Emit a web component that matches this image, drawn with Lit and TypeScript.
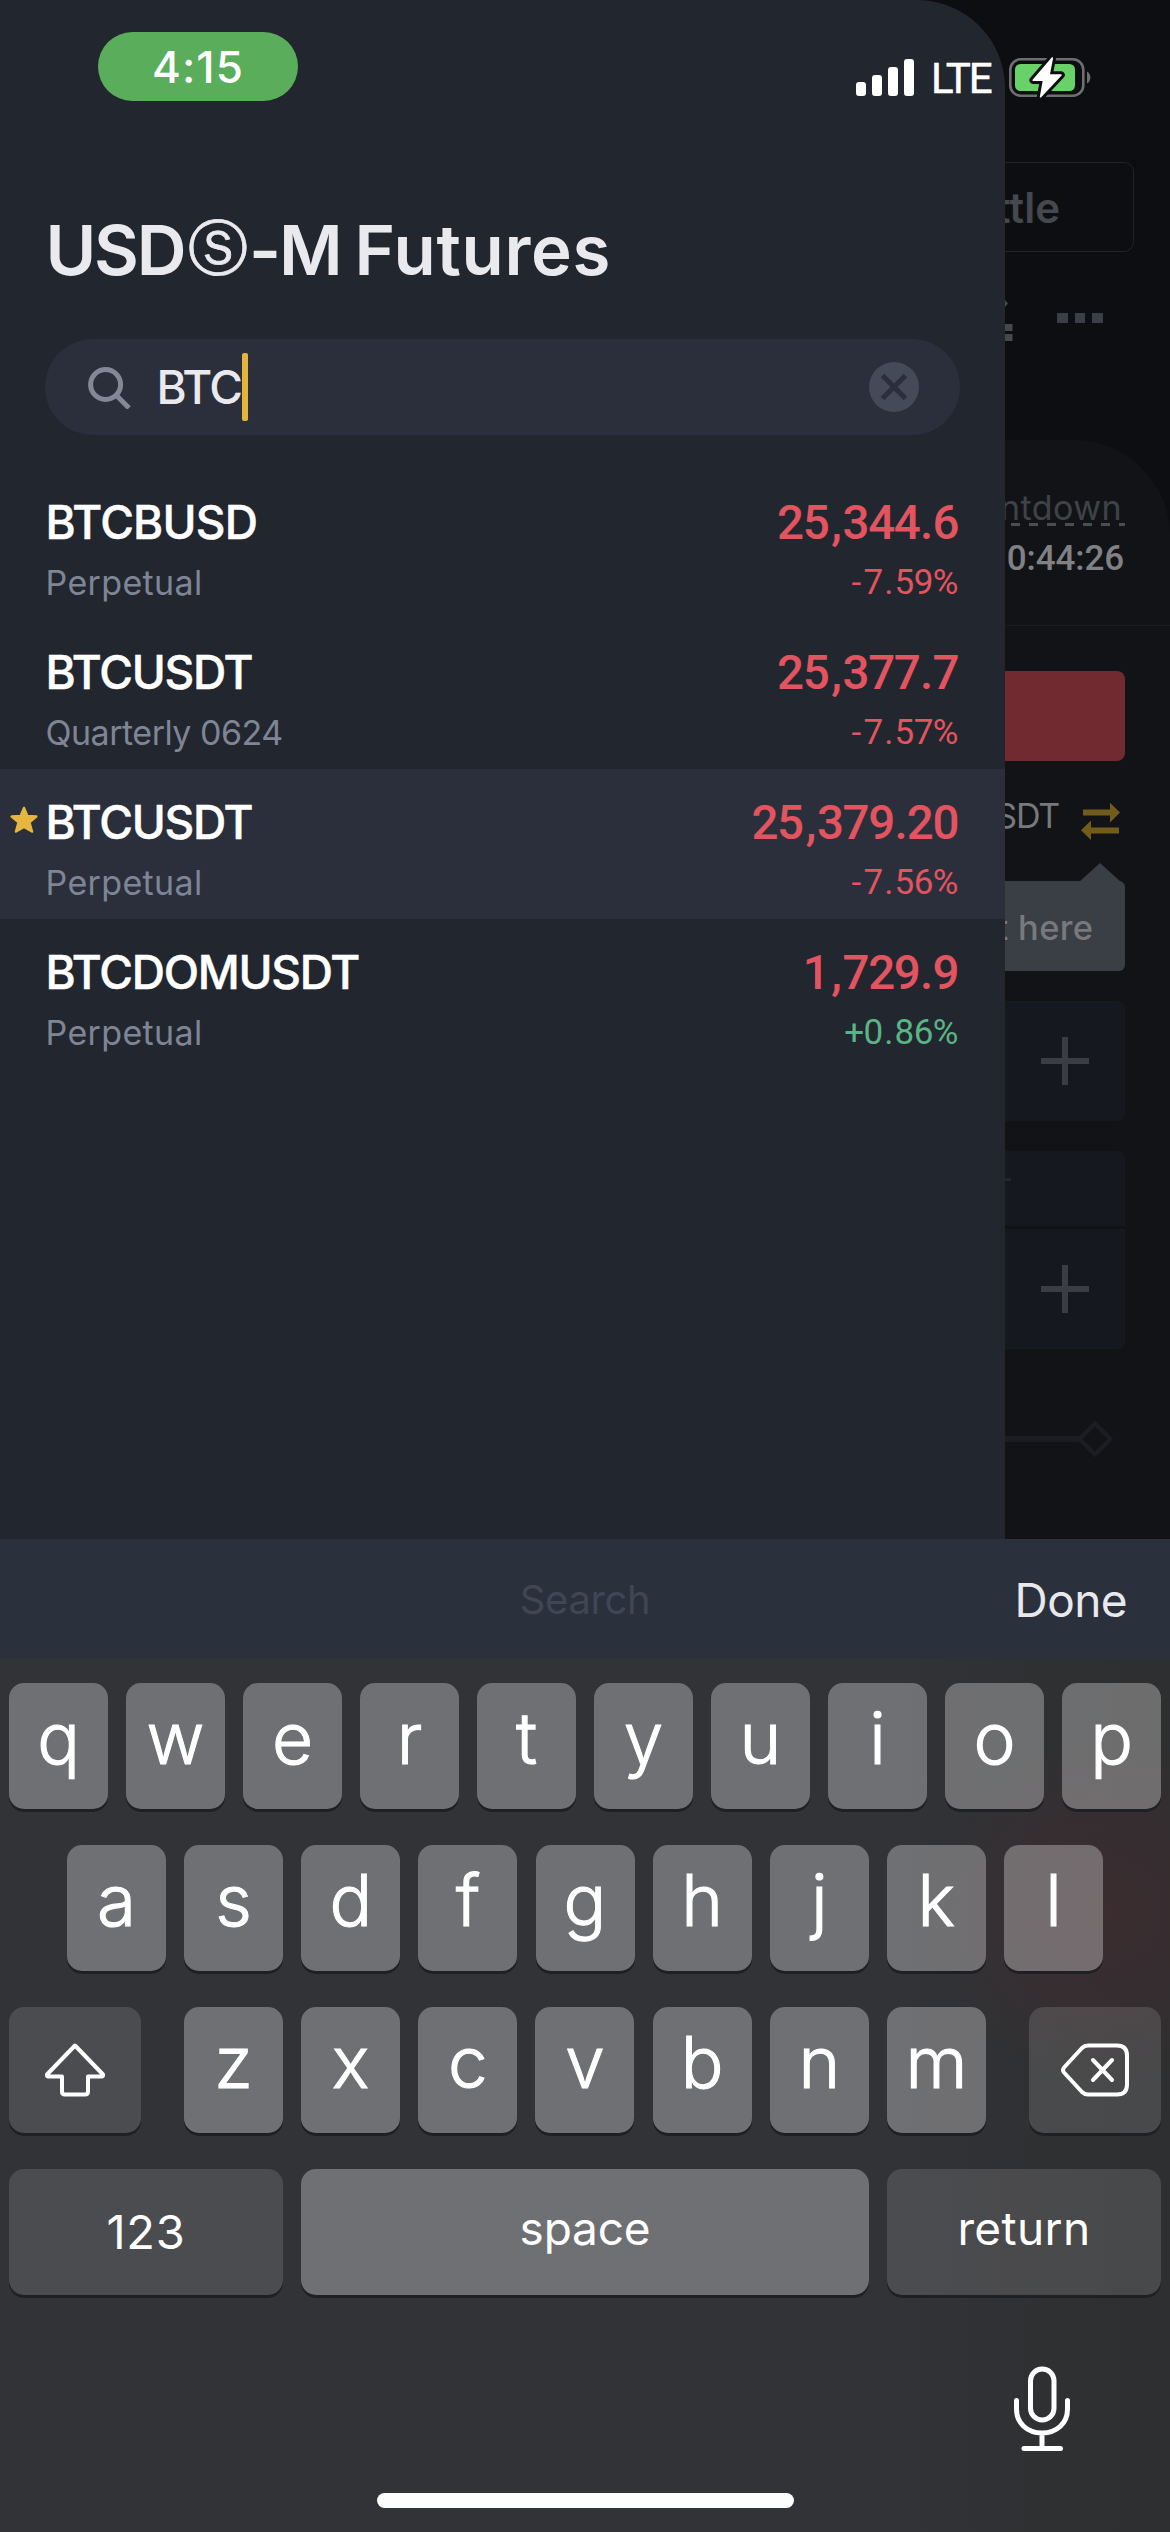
import { LitElement, html, css, nothing } from "lit";
import { customElement, property } from "lit/decorators.js";
import { classMap } from "lit/directives/class-map.js";

interface Pair {
  symbol: string;
  term: string;
  price: string;
  change: string;
  up?: boolean;
  starred?: boolean;
}

const PAIRS: Pair[] = [
  { symbol: "BTCBUSD", term: "Perpetual", price: "25,344.6", change: "-7.59%" },
  { symbol: "BTCUSDT", term: "Quarterly 0624", price: "25,377.7", change: "-7.57%" },
  { symbol: "BTCUSDT", term: "Perpetual", price: "25,379.20", change: "-7.56%", starred: true },
  { symbol: "BTCDOMUSDT", term: "Perpetual", price: "1,729.9", change: "+0.86%", up: true },
];

@customElement("status-bar")
class StatusBar extends LitElement {
  static styles = css`
    :host { display: flex; align-items: flex-start; height: 120px; padding-left: 98px; box-sizing: border-box; color: #fff; font-family: Inter, sans-serif; }
    .time { margin-top: 32px; width: 200px; height: 69px; border-radius: 35px; background: #5aad5a; font-size: 44px; font-weight: 500; line-height: 70px; text-align: center; letter-spacing: 1.1px; }
    .signal { margin: 59px 0 0 558px; }
    .net { margin: 54px 0 0 17px; width: 62px; font: 400 42px/50px Roboto, sans-serif; letter-spacing: -2.2px; -webkit-text-stroke: 0.5px #fff; }
    .battery { margin: 54px 0 0 12px; }
    svg { display: block; flex: none; }
  `;
  render() {
    return html`
      <div class="time">4:15</div>
      <svg class="signal" width="58" height="37" fill="#fff">
        <rect x="0" y="23" width="10" height="14" rx="3"/><rect x="16" y="16" width="10" height="21" rx="3"/>
        <rect x="32" y="8" width="10" height="29" rx="3"/><rect x="48" y="0" width="10" height="37" rx="3"/>
      </svg>
      <span class="net">LTE</span>
      <svg class="battery" width="90" height="50" viewBox="1005 54 90 50">
        <rect x="1010.3" y="59.3" width="73" height="36.4" rx="10.5" fill="none" stroke="#6e6f72" stroke-width="2.6"/>
        <path d="M1087 71.5a7 7 0 0 1 0 12z" fill="#6e6f72"/>
        <rect x="1015" y="64" width="60" height="27" rx="5.5" fill="#68d168"/>
        <path d="M1052.3 58L1033.2 80.2H1043.6L1040.6 96.8L1061 75H1049z" fill="#0d0e12" stroke="#0d0e12" stroke-width="7.5" stroke-linejoin="round"/>
        <path d="M1052.3 58L1033.2 80.2H1043.6L1040.6 96.8L1061 75H1049z" fill="#fff" stroke="#fff" stroke-width="1.6" stroke-linejoin="round"/>
      </svg>`;
  }
}

@customElement("trade-backdrop")
class TradeBackdrop extends LitElement {
  static styles = css`
    :host { display: block; overflow: hidden; padding-top: 162px; box-sizing: border-box; background: #0d0e12; color: #78797c; font-family: Inter, sans-serif; }
    .battle { box-sizing: border-box; height: 90px; margin: 0 36px 0 -20px; border: 1.5px solid #202226; border-radius: 10px; padding-right: 73px; font-size: 42px; font-weight: 600; line-height: 89px; color: #45484d; white-space: nowrap; display: flex; justify-content: flex-end; }
    svg { display: block; overflow: visible; }
    .tools { margin-top: 38px; }
    .sheet { margin-top: 90px; height: 1100px; box-sizing: border-box; padding-top: 45.5px; background: #121317; border-top-right-radius: 96px; }
    .label { width: 123px; height: 40.5px; margin-left: -3px; padding-right: 3px; box-sizing: border-box; font-size: 34px; line-height: 44px; letter-spacing: 0.45px; color: #3f4347; display: flex; justify-content: flex-end;
      background: repeating-linear-gradient(90deg, transparent 0 9px, #4b4e51 9px 18px) left bottom / 100% 3px no-repeat; }
    .clock { margin: 11px 46px 44px 0; font: 500 35px/44px Roboto, sans-serif; color: #808184; display: flex; justify-content: flex-end; letter-spacing: -0.1px; }
    .rule { height: 1px; background: #1a1c20; }
    .sell { margin: 45px 45px 0 0; height: 90px; border-radius: 0 8px 8px 0; background: #702a30; }
    .asset { display: flex; justify-content: flex-end; margin: 32.6px 45px 0 0; height: 44px; gap: 21px; font-size: 34px; line-height: 44px; letter-spacing: -1.2px; }
    .arrows { flex: none; }
    .tip { position: relative; margin: 43.4px 45px 0 0; height: 90px; border-radius: 0 6px 6px 0; background: #3a3e45; padding-right: 31.5px; display: flex; justify-content: flex-end; font-size: 34.5px; font-weight: 500; line-height: 93px; letter-spacing: 0.36px; white-space: nowrap; }
    .caret { position: absolute; right: 4px; top: -18px; width: 42px; height: 19px; background: #3a3e45; clip-path: polygon(50% 0, 100% 100%, 0 100%); }
    .box { margin: 30px 45px 0 0; height: 120px; box-sizing: border-box; border: 2px solid #17191d; border-left: 0; border-radius: 0 8px 8px 0; background: #15181f; display: flex; align-items: center; padding-left: 36px; }
    .head { height: 75px; border-radius: 0 8px 0 0; padding: 0; border-bottom: 0; }
    .tail { margin-top: 3px; border-radius: 0 0 8px 0; }
    .dash { width: 6px; height: 3px; background: #23262c; margin-top: -19px; }
    .slider { margin-top: 60px; }
  `;
  private plus() {
    return html`<svg width="48" height="48" stroke="#3a3d44" stroke-width="6"><path d="M0 24H48M24 0V48"/></svg>`;
  }
  render() {
    return html`
      <div class="battle">ttle</div>
      <svg class="tools" width="165" height="60" fill="#45484d">
        <path d="M0 10l3 3.5l-3 3.5z"/><rect x="0" y="34" width="7.5" height="7"/><rect x="0" y="44" width="7.5" height="7"/>
        <g fill="#3b3f45"><rect x="52" y="23" width="11" height="10"/><rect x="70" y="23" width="10" height="10"/><rect x="87" y="23" width="11" height="10"/></g>
      </svg>
      <div class="sheet">
        <div class="label">ntdown</div>
        <div class="clock">0:44:26</div>
        <div class="rule"></div>
        <div class="sell"></div>
        <div class="asset">SDT
          <svg class="arrows" width="45" height="44" viewBox="1080 793.6 45 44" fill="#735c1b">
            <path d="M1083 809h27v-6.6l10 9.8l-10 9.8v-7h-27zM1119 833h-28v6.6l-10-9.8l10-9.8v7h28z"/>
          </svg>
        </div>
        <div class="tip"><i class="caret"></i>t here</div>
        <div class="box">${this.plus()}</div>
        <div class="box head"><i class="dash"></i></div>
        <div class="box tail">${this.plus()}</div>
        <svg class="slider" width="165" height="60" fill="none" stroke="#1b1d22">
          <path d="M0 30H73" stroke-width="6"/>
          <path d="M90 14.5L105.5 30L90 45.5L74.5 30z" stroke-width="4.5" stroke-linejoin="round"/>
        </svg>
      </div>`;
  }
}

@customElement("pair-drawer")
class PairDrawer extends LitElement {
  static styles = css`
    :host { display: block; box-sizing: border-box; padding-top: 207px; background: #22262f; border-top-right-radius: 88px; font-family: Inter, sans-serif; color: #fff; }
    h1 { margin: 0 0 0 45.5px; height: 84px; font-size: 69px; font-weight: 600; line-height: 86px; color: #eaeaee; white-space: nowrap; }
    .usd { letter-spacing: -2.2px; }
    .coin { font: 400 60px/1px "DejaVu Sans", sans-serif; vertical-align: 6px; margin: 0 0.5px 0 4px; -webkit-text-stroke: 0.8px #eaeaee; }
    .rest { letter-spacing: -2px; }
    .word { letter-spacing: 0.7px; margin-left: -1.5px; }
    .search { margin: 48px 45px 0; height: 96px; border-radius: 48px; background: #2a2f3b; display: flex; align-items: center; padding: 0 41px 0 43px; box-sizing: border-box; color: #eaeaee; font-size: 46px; line-height: 99px; }
    .query { margin-left: 24.5px; letter-spacing: -1.8px; font-weight: 500; }
    .cursor { width: 6px; height: 68px; border-radius: 2px; background: #e2b53e; margin-left: 1px; }
    .clear { margin-left: auto; }
    svg { display: block; flex: none; }
    .list { margin-top: 34px; }
    .row { height: 150px; box-sizing: border-box; padding: 26px 47px 0 45.5px; display: flex; justify-content: space-between; position: relative; }
    .row.active { background: #2a2f3b; }
    .star { position: absolute; left: 9.5px; top: 37px; }
    .name, .quote { display: flex; flex-direction: column; gap: 10px; }
    .name { margin-top: -1.5px; gap: 11px; }
    .quote { align-items: flex-end; font-family: Roboto, sans-serif; color: #e2545f; }
    .symbol { font-size: 46px; font-weight: 500; line-height: 56px; letter-spacing: -1.25px; -webkit-text-stroke: 0.5px #fff; }
    .symbol.wide { letter-spacing: -0.8px; }
    .term { font-size: 34px; line-height: 44px; letter-spacing: 0.35px; color: #7e8594; }
    .term.long { letter-spacing: -0.5px; }
    .price { font-size: 47.5px; font-weight: 500; line-height: 56px; letter-spacing: -1.4px; }
    .price .comma { margin: 0 2px 0 3px; }
    .price .dot { margin: 0 0.6px; }
    .change { font-size: 35px; line-height: 44px; letter-spacing: -0.5px; }
    .change .dot { margin: 0 1.5px; }
    .change .minus { margin-right: 3px; }
    .change.up { color: #5bb386; }
  `;
  private figures(text: string) {
    const kinds: Record<string, string> = { ",": "comma", ".": "dot", "-": "minus" };
    return [...text].map((c) => (kinds[c] ? html`<span class=${kinds[c]}>${c}</span>` : c));
  }
  private row(p: Pair) {
    return html`<div class=${classMap({ row: true, active: !!p.starred })}>
      ${p.starred
        ? html`<svg class="star" width="28" height="28" viewBox="0 0 28 28"><path d="M14 2L17.3 9.9L26.3 10.5L19.4 16.4L22 25.5L14 20.8L6 25.5L8.6 16.4L1.7 10.5L10.7 9.9z" fill="#e6b73f" stroke="#e6b73f" stroke-width="2.5" stroke-linejoin="round"/></svg>`
        : nothing}
      <div class="name">
        <span class=${classMap({ symbol: true, wide: p.symbol.endsWith("BUSD") })}>${p.symbol}</span>
        <span class=${classMap({ term: true, long: p.term.length > 10 })}>${p.term}</span>
      </div>
      <div class="quote">
        <span class="price">${this.figures(p.price)}</span>
        <span class=${classMap({ change: true, up: !!p.up })}>${this.figures(p.change)}</span>
      </div>
    </div>`;
  }
  render() {
    return html`
      <h1><span class="usd">USD</span><span class="coin">Ⓢ</span><span class="rest">-M </span><span class="word">Futures</span></h1>
      <div class="search">
        <svg width="44" height="44" viewBox="0 0 44 44" fill="none" stroke="#828896" stroke-width="5"><circle cx="17.6" cy="19.5" r="15"/><path d="M28.5 30.5L41 43"/></svg>
        <span class="query">BTC</span><i class="cursor"></i>
        <svg class="clear" width="50" height="50"><circle cx="25" cy="25" r="25" fill="#454a58"/><path d="M13.5 13.5L36.5 36.5M36.5 13.5L13.5 36.5" stroke="#2a2f3b" stroke-width="5"/></svg>
      </div>
      <div class="list">${PAIRS.map((p) => this.row(p))}</div>`;
  }
}

@customElement("key-cap")
class KeyCap extends LitElement {
  @property() kind = "letter";
  static styles = css`
    :host { display: flex; justify-content: center; height: 126px; width: 99px; flex: none; box-sizing: border-box; border-radius: 15px; background: rgba(255, 255, 255, 0.3); box-shadow: 0 3px 0 #1f2023; color: #fff; font: 300 71px/110px Inter, sans-serif; -webkit-text-stroke: 1.1px #fff; }
    :host([kind="mod"]) { width: 132px; align-items: center; background: rgba(255, 255, 255, 0.125); }
    :host([kind="fn"]) { width: 274px; background: rgba(255, 255, 255, 0.125); font-size: 46px; font-weight: 400; line-height: 119px; letter-spacing: 0.4px; -webkit-text-stroke: 0; }
    :host([kind="num"]) { width: 274px; background: rgba(255, 255, 255, 0.125); font-size: 47px; font-weight: 400; line-height: 126px; letter-spacing: 0.8px; -webkit-text-stroke: 0; }
    :host([kind="space"]) { width: 568px; font-size: 46px; font-weight: 400; line-height: 119px; letter-spacing: -0.2px; -webkit-text-stroke: 0; }
  `;
  render() {
    return html`<slot></slot>`;
  }
}

@customElement("touch-keyboard")
class TouchKeyboard extends LitElement {
  static styles = css`
    :host { display: flex; flex-direction: column; height: 993px; color: #fff; font-family: Inter, sans-serif;
      background: radial-gradient(circle 175px at 1108px 372px, rgba(96, 38, 48, 0.26), rgba(96, 38, 48, 0.17) 45%, rgba(96, 38, 48, 0)), linear-gradient(90deg, #323337 900px, #2e2f30 1120px); }
    .bar { flex: none; height: 120px; background: #2a303c; display: grid; grid-template-columns: 1fr auto 1fr; padding: 0 43px; align-items: center; }
    .hint { grid-column: 2; font-size: 40px; line-height: 122px; letter-spacing: -0.4px; color: #404654; }
    .done { justify-self: end; font-size: 46px; line-height: 120px; letter-spacing: -0.6px; color: #e8e9ed; }
    .keys { display: flex; flex-direction: column; gap: 36px; padding: 24px 9px 0; }
    .line { display: flex; justify-content: space-between; }
    .inset { padding: 0 58px; }
    .mid { display: flex; justify-content: space-between; width: 802px; }
    .foot { display: flex; justify-content: flex-end; padding: 69px 98px 0 0; }
    .home { margin: 39px auto 0; width: 417px; height: 15px; border-radius: 8px; background: #fdfdfd; }
    svg { display: block; }
  `;
  private caps(s: string) {
    return [...s].map((c) => html`<key-cap>${c}</key-cap>`);
  }
  render() {
    return html`
      <div class="bar"><span class="hint">Search</span><span class="done">Done</span></div>
      <div class="keys">
        <div class="line">${this.caps("qwertyuiop")}</div>
        <div class="line inset">${this.caps("asdfghjkl")}</div>
        <div class="line">
          <key-cap kind="mod"><svg width="62" height="56" viewBox="0 0 62 56" fill="none" stroke="#fff" stroke-width="4" stroke-linejoin="round"><path d="M31 3.5L59 32.5Q59.5 34.5 57.5 34.5H44V49.5Q44 52.5 41 52.5H21Q18 52.5 18 49.5V34.5H4.5Q2.5 34.5 3 32.5z"/></svg></key-cap>
          <div class="mid">${this.caps("zxcvbnm")}</div>
          <key-cap kind="mod"><svg width="70" height="54" viewBox="0 0 70 54" fill="none" stroke="#fff" stroke-width="4" stroke-linecap="round" stroke-linejoin="round"><path d="M28 2.5H57Q67 2.5 67 12.5V41.5Q67 51.5 57 51.5H28Q24.5 51.5 22 49L4 29.5Q2 27 4 24.5L22 5Q24.5 2.5 28 2.5z"/><path d="M33 17L52 37M52 17L33 37"/></svg></key-cap>
        </div>
        <div class="line"><key-cap kind="num">123</key-cap><key-cap kind="space">space</key-cap><key-cap kind="fn">return</key-cap></div>
      </div>
      <div class="foot">
        <svg width="60" height="90" viewBox="0 0 60 90" fill="none" stroke="#fff" stroke-width="5" stroke-linecap="round">
          <rect x="18.5" y="5" width="23.5" height="51" rx="11.7"/>
          <path d="M4.5 36.5V45C4.5 59 15 69 30 69S55.5 59 55.5 45V36.5M30 69V84M12 84.5H48.5"/>
        </svg>
      </div>
      <div class="home"></div>`;
  }
}

@customElement("app-root")
class AppRoot extends LitElement {
  static styles = css`
    :host { display: grid; width: 1170px; height: 2532px; overflow: hidden; background: #0d0e12; }
    .layer { grid-area: 1 / 1; }
    .behind { margin-left: 1005px; height: 1539px; }
    .drawer { width: 1005px; height: 1539px; }
    .status { align-self: start; }
    .keyboard { align-self: end; }
  `;
  render() {
    return html`
      <trade-backdrop class="layer behind"></trade-backdrop>
      <pair-drawer class="layer drawer"></pair-drawer>
      <status-bar class="layer status"></status-bar>
      <touch-keyboard class="layer keyboard"></touch-keyboard>`;
  }
}
